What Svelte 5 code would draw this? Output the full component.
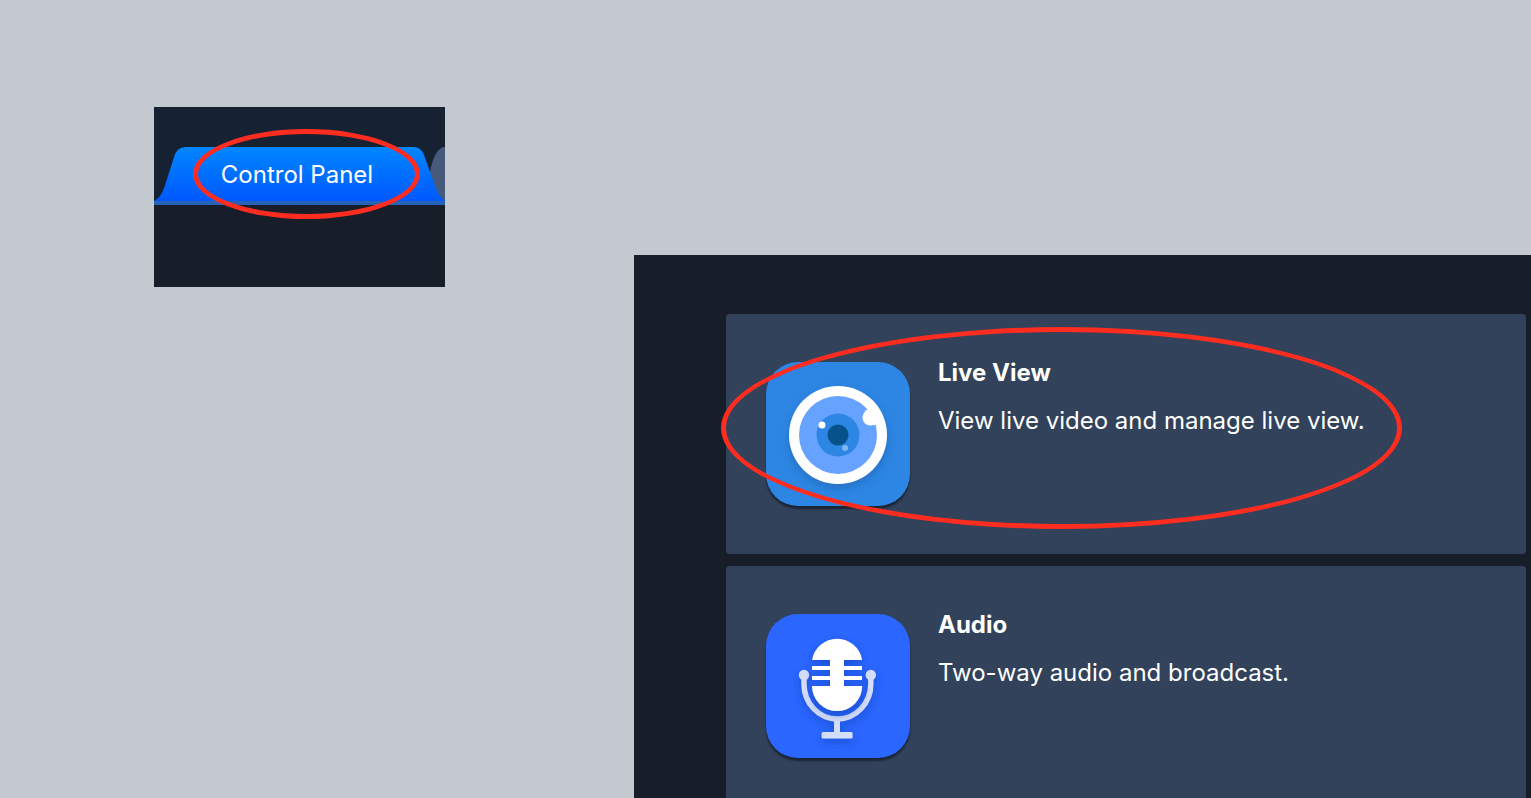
<script>

const apps = [
	{ id: 'live', title: 'Live View', text: 'View live video and manage live view.', marked: true },
	{ id: 'audio', title: 'Audio', text: 'Two-way audio and broadcast.', marked: false },
];

</script>

<style>
	:global(body) { margin:0; background:#c4c8cf }
	main {
		display: flex;
		height: 100vh;
		overflow: hidden;
		color: #fff;
		font: 24px/22px Inter, "Liberation Sans", sans-serif;
	}
	.side {
		flex: 0 0 480px;
		padding: 107px 0 0 154px;
	}
	.tabs {
		width: 291px;
		height: 180px;
		background: #171e2a;
	}
	nav {
		position: relative;
		padding-top: 40px;
		background: #162132;
		border-bottom: 4px solid #2663b8;
	}
	.shape {
		position: absolute;
		left: 0;
		bottom: 0;
		display: block;
		width: 291px;
		height: 54px;
	}
	button {
		position: relative;
		display: block;
		width: 286px;
		height: 54px;
		padding: 2px 0 0;
		border: none;
		background: none;
		color: inherit;
		font: inherit;
		cursor: pointer;
	}
	.ring {
		position: absolute;
		box-sizing: border-box;
		border: 5px solid #ff2d20;
		border-radius: 50%;
		pointer-events: none;
	}
	.ring.tab  { left:39px; top:22px; width:227px; height:90px }
	.ring.card { left:-5px; top:13px; width:681px; height:202px }
	.panel {
		flex: 1;
		display: flex;
		flex-direction: column;
		gap: 12px;
		margin-top: 255px;
		padding: 59px 5px 0 92px;
		background: #171e2a;
	}
	article {
		position: relative;
		flex: none;
		display: flex;
		gap: 28px;
		box-sizing: border-box;
		height: 240px;
		padding: 48px 40px;
		border-radius: 4px;
		background: #31425a;
	}
	.icon {
		flex: none;
		width: 144px;
		height: 144px;
		border-radius: 32px;
		box-shadow: 0 3px 2px #1b2536;
	}
	.icon.live  { background:#2d86e3 }
	.icon.audio { background:#2a66ff }
	.icon svg { display:block }
	h2, p { margin:0; font-size:24px; line-height:22px }
	h2 { margin-bottom:26px; font-weight:700 }
</style>

<main>
	<div class="side">
		<div class="tabs">
			<nav>
				<svg class="shape" viewBox="0 0 291 54" aria-hidden="true">
					<defs>
						<linearGradient id="tab-fill" x1="0" y1="0" x2="0" y2="1">
							<stop offset="0" stop-color="#0087ff"/>
							<stop offset="1" stop-color="#0058ff"/>
						</linearGradient>
					</defs>
					<path d="M270 54L277 20Q282 0 291 0V54Z" fill="#475a7b"/>
					<path d="M0 54C7 51 10 42 13 32L20 10Q23 0 31 0H260Q267 0 270 8L280 36Q284 49 291 54Z" fill="url(#tab-fill)"/>
				</svg>
				<button type="button">Control Panel</button>
				<div class="ring tab"></div>
			</nav>
		</div>
	</div>
	<section class="panel">
		{#each apps as app}
			<article>
				<div class="icon {app.id}">
					{#if app.id == 'live'}
						<svg width="144" height="144" viewBox="0 0 144 144" aria-hidden="true">
							<filter id="soft" x="-20%" y="-20%" width="140%" height="150%">
								<feDropShadow dx="0" dy="4" stdDeviation="4" flood-color="#123f80" flood-opacity=".35"/>
							</filter>
							<g filter="url(#soft)">
								<circle cx="72" cy="73" r="49" fill="#fff"/>
							</g>
							<circle cx="72" cy="73" r="39" fill="#66a2ff"/>
							<path d="M99 48L106 50L112 60L109 63H104Z" fill="#fff"/>
							<circle cx="104.5" cy="55.5" r="8" fill="#fff"/>
							<circle cx="72" cy="73" r="21.5" fill="#2d86e3"/>
							<circle cx="72" cy="73" r="10.5" fill="#08528c"/>
							<circle cx="56" cy="63" r="3.5" fill="#fff"/>
							<circle cx="79" cy="86" r="3" fill="#82b5f2"/>
						</svg>
					{:else}
						<svg width="144" height="144" viewBox="0 0 144 144" aria-hidden="true">
							<filter id="mic-soft" x="-20%" y="-20%" width="140%" height="150%">
								<feDropShadow dx="0" dy="4" stdDeviation="4" flood-color="#102f90" flood-opacity=".4"/>
							</filter>
							<g filter="url(#mic-soft)">
								<path d="M38 62V70A33.4 35 0 0 0 104.8 70V62" fill="none" stroke="#d4defb" stroke-width="5.4"/>
								<circle cx="38" cy="61" r="5.2" fill="#d4defb"/>
								<circle cx="104.8" cy="61" r="5.2" fill="#d4defb"/>
								<path d="M68 106H74V118H68Z" fill="#d4defb"/>
								<rect x="55.6" y="118" width="31" height="6.5" rx="1.5" fill="#d4defb"/>
							</g>
							<g filter="url(#mic-soft)" fill="#fff">
								<path d="M46.2 46A25.2 25 0 0 1 96 46H78V72H96.2A25 25 0 0 1 46 72H64V46Z"/>
								<path d="M46 52H65V56H46ZM77 52H96V56H77ZM46 62H65V66H46ZM77 62H96V66H77Z"/>
							</g>
						</svg>
					{/if}
				</div>
				<div>
					<h2>{app.title}</h2>
					<p>{app.text}</p>
				</div>
				{#if app.marked}
					<div class="ring card"></div>
				{/if}
			</article>
		{/each}
	</section>
</main>
